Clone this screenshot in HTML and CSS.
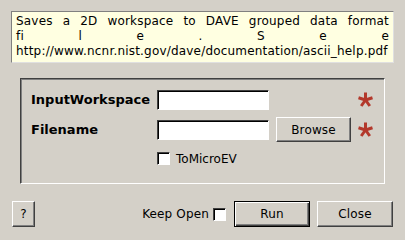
FILE: index.html
```html
<!DOCTYPE html>
<html lang="en">
<head>
    <meta charset="UTF-8">
    <title>SaveDaveGrp</title>
    <link rel="stylesheet" href="styles.css">
</head>
<body>
    <div class="dialog">
        <div class="description">
            <div class="line justify">Saves a 2D workspace to DAVE grouped data format</div>
            <div class="line spread">
                <span>fi</span><span>l</span><span>e</span><span>.</span><span>S</span><span>e</span><span>e</span>
            </div>
            <div class="line">http://www.ncnr.nist.gov/dave/documentation/ascii_help.pdf</div>
        </div>

        <div class="group">
            <label class="prop-label" for="ws">InputWorkspace</label>
            <input class="field" type="text" id="ws">
            <span></span>
            <span class="star"><svg width="15" height="15" viewBox="0 0 15 15"><g stroke="#b3382b" stroke-width="3" stroke-linecap="butt"><line x1="7.5" y1="8" x2="7.5" y2="0.5"/><line x1="7.5" y1="8" x2="14.5" y2="5.7"/><line x1="7.5" y1="8" x2="11.8" y2="14"/><line x1="7.5" y1="8" x2="3.2" y2="14"/><line x1="7.5" y1="8" x2="0.5" y2="5.7"/></g></svg></span>

            <label class="prop-label" for="fn">Filename</label>
            <input class="field" type="text" id="fn">
            <button class="btn browse" type="button">Browse</button>
            <span class="star"><svg width="15" height="15" viewBox="0 0 15 15"><g stroke="#b3382b" stroke-width="3" stroke-linecap="butt"><line x1="7.5" y1="8" x2="7.5" y2="0.5"/><line x1="7.5" y1="8" x2="14.5" y2="5.7"/><line x1="7.5" y1="8" x2="11.8" y2="14"/><line x1="7.5" y1="8" x2="3.2" y2="14"/><line x1="7.5" y1="8" x2="0.5" y2="5.7"/></g></svg></span>

            <span></span>
            <label class="check-row"><span class="box"></span>ToMicroEV</label>
        </div>

        <div class="footer">
            <button class="btn help" type="button">?</button>
            <div class="spacer"></div>
            <label class="keep">Keep Open <span class="box"></span></label>
            <button class="btn run" type="button">Run</button>
            <button class="btn close" type="button">Close</button>
        </div>
    </div>
</body>
</html>
```

FILE: styles.css
```css
body {
    margin: 0;
    background-color: #d4d0c8;
    font-family: "DejaVu Sans", sans-serif;
    font-size: 12px;
    color: #000;
}
.dialog {
    width: 405px;
    height: 240px;
    padding: 11px 11px 0 11px;
    box-sizing: border-box;
}
/* yellow help text at the top */
.description {
    background: #ffffe1;
    border: 1px solid;
    border-color: #808080 #e0e0e0 #e0e0e0 #808080;
    height: 52px;
    padding: 2px 4px 0 4px;
    box-sizing: border-box;
    line-height: 15px;
    letter-spacing: 0.19px;
}
.line {
    white-space: nowrap;
}
.justify {
    text-align: justify;
    text-align-last: justify;
}
.spread {
    display: flex;
    justify-content: space-between;
}
/* sunken frame round the properties */
.group {
    margin: 15px 9px 0 9px;
    height: 106px;
    box-sizing: border-box;
    border: 1px solid;
    border-color: #404040 #fff #fff #404040;
    box-shadow: inset 1px 1px 0 #808080;
    padding: 8px 0 0 10px;
    display: grid;
    grid-template-columns: 126px 112px 82px 22px;
    grid-template-rows: 25px 25px 23px;
    row-gap: 5px;
    align-items: center;
}
.prop-label {
    font-weight: bold;
    font-size: 13px;
}
.field {
    width: 112px;
    height: 20px;
    margin: 0;
    padding: 0;
    box-sizing: border-box;
    background: #fff;
    border: 1px solid;
    border-color: #404040 #fff #fff #404040;
    box-shadow: inset 1px 1px 0 #000;
}
.star {
    display: flex;
    justify-content: flex-end;
}
.star svg {
    display: block;
}
.btn {
    font-family: "DejaVu Sans", sans-serif;
    font-size: 12px;
    letter-spacing: 0.15px;
    color: #000;
    background: #d4d0c8;
    height: 25px;
    margin: 0;
    padding: 0;
    box-sizing: border-box;
    border: 1px solid;
    border-color: #fff #404040 #404040 #fff;
    box-shadow: inset -1px -1px 0 #808080;
}
.browse {
    width: 75px;
    margin-left: 7px;
}
.check-row {
    display: flex;
    align-items: center;
    gap: 6px;
}
.box {
    display: inline-block;
    width: 13px;
    height: 13px;
    box-sizing: border-box;
    background: #fff;
    border: 1px solid;
    border-color: #404040 #fff #fff #404040;
    box-shadow: inset 1px 1px 0 #000;
}
.footer {
    display: flex;
    align-items: center;
    margin-top: 17px;
    padding-left: 1px;
}
.spacer {
    flex: 1;
}
.help {
    width: 23px;
    height: 26px;
}
.keep {
    display: flex;
    align-items: center;
    gap: 4px;
    margin-right: 8px;
    letter-spacing: 0.15px;
}
.run {
    width: 76px;
    height: 26px;
    border: 1px solid #000;
    box-shadow: inset 1px 1px 0 #fff, inset -1px -1px 0 #404040, inset -2px -2px 0 #808080;
    margin-right: 7px;
}
.close {
    width: 76px;
    height: 26px;
    margin-right: 1px;
}
```
